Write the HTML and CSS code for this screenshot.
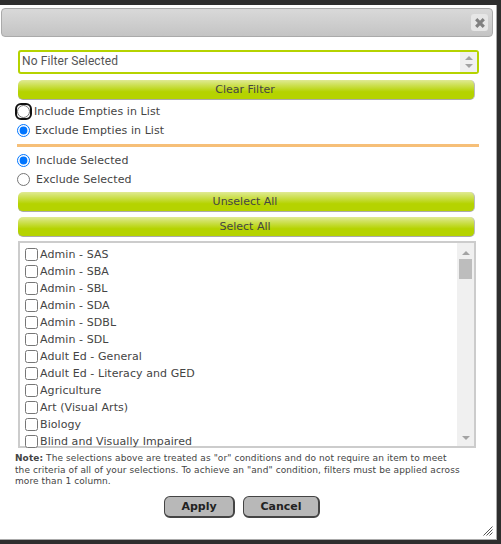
FILE: index.html
```html
<!DOCTYPE html>
<html lang="en">
<head>
    <meta charset="UTF-8">
    <meta name="viewport" content="width=device-width, initial-scale=1.0">
    <title>Column Filter</title>
    <link rel="stylesheet" href="styles.css">
</head>
<body>
    <div class="dialog">
        <div class="titlebar">
            <button class="close-button" aria-label="Close">
                <svg width="12" height="12" viewBox="0 0 12 12"><path d="M2.2 2.2 L9.8 9.8 M9.8 2.2 L2.2 9.8" stroke="#808080" stroke-width="3.2" fill="none"/></svg>
            </button>
        </div>

        <div class="content">
            <div class="filter-select">
                <span class="filter-value">No Filter Selected</span>
                <div class="spinner">
                    <span class="arrow-up"></span>
                    <span class="arrow-down"></span>
                </div>
            </div>
            <button class="green-button clear-button">Clear Filter</button>

            <div class="radio-row first-row">
                <span class="focus-ring"><input type="radio" name="empties" id="includeEmpties"></span>
                <label for="includeEmpties">Include Empties in List</label>
            </div>
            <div class="radio-row">
                <input type="radio" name="empties" id="excludeEmpties" checked>
                <label for="excludeEmpties">Exclude Empties in List</label>
            </div>

            <hr>

            <div class="radio-row wide-row">
                <input type="radio" name="selected" id="includeSelected" checked>
                <label for="includeSelected">Include Selected</label>
            </div>
            <div class="radio-row wide-row">
                <input type="radio" name="selected" id="excludeSelected">
                <label for="excludeSelected">Exclude Selected</label>
            </div>

            <button class="green-button unselect-button">Unselect All</button>
            <button class="green-button select-button">Select All</button>

            <div class="list-box">
                <div class="list-items">
                    <label class="list-item"><input type="checkbox">Admin - SAS</label>
                    <label class="list-item"><input type="checkbox">Admin - SBA</label>
                    <label class="list-item"><input type="checkbox">Admin - SBL</label>
                    <label class="list-item"><input type="checkbox">Admin - SDA</label>
                    <label class="list-item"><input type="checkbox">Admin - SDBL</label>
                    <label class="list-item"><input type="checkbox">Admin - SDL</label>
                    <label class="list-item"><input type="checkbox">Adult Ed - General</label>
                    <label class="list-item"><input type="checkbox">Adult Ed - Literacy and GED</label>
                    <label class="list-item"><input type="checkbox">Agriculture</label>
                    <label class="list-item"><input type="checkbox">Art (Visual Arts)</label>
                    <label class="list-item"><input type="checkbox">Biology</label>
                    <label class="list-item"><input type="checkbox">Blind and Visually Impaired</label>
                </div>
                <div class="scrollbar">
                    <span class="arrow-up"></span>
                    <div class="scroll-thumb"></div>
                    <span class="arrow-down"></span>
                </div>
            </div>

            <p class="note"><strong>Note:</strong> The selections above are treated as "or" conditions and do not require an item to meet the criteria of all of your selections. To achieve an "and" condition, filters must be applied across more than 1 column.</p>

            <div class="actions">
                <button class="gray-button apply-button">Apply</button>
                <button class="gray-button cancel-button">Cancel</button>
            </div>
        </div>

        <svg class="resize-handle" width="10" height="10" viewBox="0 0 10 10"><path d="M9.5 0.5 L0.5 9.5 M9.5 3.5 L3.5 9.5 M9.5 6.5 L6.5 9.5" stroke="#555" stroke-width="1" fill="none"/></svg>
    </div>
</body>
</html>
```

FILE: styles.css
```css
body {
    margin: 0;
    padding-top: 5px;
    height: 544px;
    box-sizing: border-box;
    overflow: hidden;
    background-color: #2e2e2e;
    font-family: "DejaVu Sans", Verdana, sans-serif;
    color: #444;
}

.dialog {
    position: relative;
    width: 497px;
    height: 535px;
    box-sizing: border-box;
    padding: 3px 3px 0 1px;
    background-color: #fff;
    border-right: 1px solid #aaa;
    border-bottom: 1px solid #aaa;
}

.titlebar {
    display: flex;
    align-items: center;
    justify-content: flex-end;
    height: 29px;
    box-sizing: border-box;
    padding-right: 4px;
    background: linear-gradient(#d9d9d9, #c4c4c4);
    border: 1px solid #aaa;
    border-radius: 4px;
}

.close-button {
    display: flex;
    align-items: center;
    justify-content: center;
    width: 17px;
    height: 17px;
    padding: 0;
    background-color: #e6e6e6;
    border: none;
    border-radius: 3px;
}

.content {
    padding: 13px 0 0 17px;
}

.filter-select {
    display: flex;
    justify-content: space-between;
    width: 461px;
    height: 24px;
    box-sizing: border-box;
    background-color: #fff;
    border: 2px solid #b5d300;
    border-radius: 3px;
}

.filter-value {
    padding-left: 2px;
    font-family: Roboto, "Liberation Sans", sans-serif;
    font-size: 12px;
    line-height: 19px;
    letter-spacing: 0.1px;
    color: #555;
}

.spinner {
    display: flex;
    flex-direction: column;
    align-items: center;
    justify-content: center;
    gap: 4px;
    width: 17px;
    background-color: #f0f0f0;
}

.arrow-up {
    width: 0;
    height: 0;
    border-left: 4px solid transparent;
    border-right: 4px solid transparent;
    border-bottom: 4px solid #a3a3a3;
}

.arrow-down {
    width: 0;
    height: 0;
    border-left: 4px solid transparent;
    border-right: 4px solid transparent;
    border-top: 4px solid #a3a3a3;
}

.green-button {
    display: block;
    width: 457px;
    height: 20px;
    padding: 0 2px 0 0;
    font-family: "DejaVu Sans", Verdana, sans-serif;
    font-size: 11px;
    color: #444;
    background: linear-gradient(#e0ea94, #b5d300 62%);
    border: none;
    border-bottom: 1px solid #aaa;
    border-right: 1px solid #bbb;
    border-radius: 5px;
}

.clear-button {
    margin-top: 6px;
}

.unselect-button {
    margin-top: 3px;
}

.select-button {
    margin-top: 5px;
}

.radio-row {
    display: flex;
    align-items: center;
    height: 19px;
    font-size: 11px;
    letter-spacing: 0.08px;
}

.radio-row input {
    width: 13px;
    height: 13px;
    margin: 0 5px 0 -1px;
}

.wide-row input {
    margin-right: 6px;
}

.first-row {
    margin-top: 2px;
}

.focus-ring {
    display: flex;
    margin: 0 2px 0 -3px;
    padding: 0;
    border: 2px solid #111;
    border-radius: 6px;
}

.focus-ring input {
    margin: 0;
}

hr {
    width: 462px;
    height: 3px;
    margin: 4px 0 4px -1px;
    background-color: #f6bf78;
    border: none;
}

.list-box {
    display: flex;
    width: 458px;
    height: 207px;
    box-sizing: border-box;
    margin-top: 4px;
    border: 2px solid #ccc;
    background-color: #fff;
}

.list-items {
    flex: 1;
    padding: 3px 0 0 5px;
}

.list-item {
    display: flex;
    align-items: center;
    height: 17px;
    font-size: 11px;
    letter-spacing: 0.08px;
}

.list-item input {
    width: 13px;
    height: 13px;
    margin: 0 2px 0 0;
}

.scrollbar {
    display: flex;
    flex-direction: column;
    align-items: center;
    width: 17px;
    padding: 8px 0 6px;
    box-sizing: border-box;
    background-color: #f0f0f0;
}

.scroll-thumb {
    width: 13px;
    height: 20px;
    margin-top: 4px;
    margin-bottom: auto;
    background-color: #bdbdbd;
}

.note {
    width: 447px;
    margin: 5px 0 0 -3px;
    font-size: 9px;
    line-height: 11.5px;
    letter-spacing: 0.09px;
    color: #444;
}

.actions {
    display: flex;
    justify-content: center;
    gap: 8px;
    width: 448px;
    margin-top: 8px;
}

.gray-button {
    height: 22px;
    padding: 0;
    font-family: "DejaVu Sans", Verdana, sans-serif;
    font-size: 11px;
    font-weight: bold;
    color: #222;
    background-color: #b8b8b8;
    border: 1px solid #444;
    border-right-width: 2px;
    border-bottom-width: 2px;
    border-radius: 6px;
}

.apply-button {
    width: 71px;
}

.cancel-button {
    width: 77px;
}

.resize-handle {
    position: absolute;
    right: 3px;
    bottom: 3px;
}
```
